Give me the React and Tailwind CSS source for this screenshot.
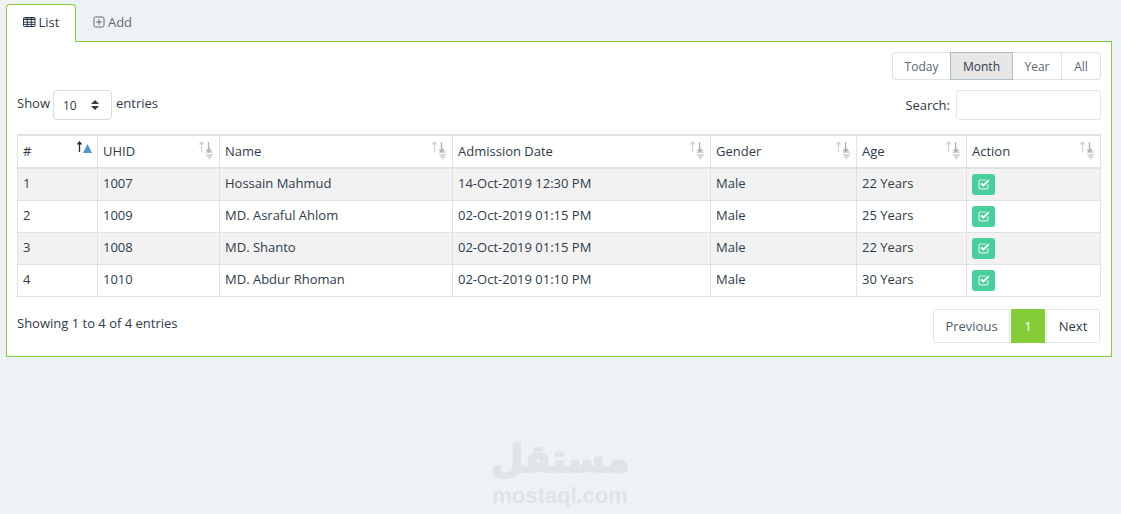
const rows = [
  { id: 1, uhid: '1007', name: 'Hossain Mahmud', date: '14-Oct-2019 12:30 PM', gender: 'Male', age: '22 Years' },
  { id: 2, uhid: '1009', name: 'MD. Asraful Ahlom', date: '02-Oct-2019 01:15 PM', gender: 'Male', age: '25 Years' },
  { id: 3, uhid: '1008', name: 'MD. Shanto', date: '02-Oct-2019 01:15 PM', gender: 'Male', age: '22 Years' },
  { id: 4, uhid: '1010', name: 'MD. Abdur Rhoman', date: '02-Oct-2019 01:10 PM', gender: 'Male', age: '30 Years' },
];

const columns = [
  { label: '#', width: 'w-[80px]', active: true },
  { label: 'UHID', width: 'w-[122px]' },
  { label: 'Name', width: 'w-[233px]' },
  { label: 'Admission Date', width: 'w-[258px]' },
  { label: 'Gender', width: 'w-[146px]' },
  { label: 'Age', width: 'w-[110px]' },
  { label: 'Action', width: 'w-[134px]' },
];

const SortIcon = ({ active }) => (
  <svg width="20" height="22" viewBox="0 0 20 22" className="absolute right-0 top-[3px]">
    {/* up arrow */}
    <path d="M2.5 13V3.5M0.5 5.5L2.5 3L4.5 5.5" fill="none" stroke={active ? '#1f2d3d' : '#cfd4d4'} strokeWidth="1.3" />
    {active ? (
      <path d="M6 14L10.5 5L15 14Z" fill="#4a98cf" />
    ) : (
      <>
        <path d="M6.5 15H14.5L10.5 21Z M6.5 14L10.5 8L14.5 14Z" fill="#d5d9dc" />
        {/* down arrow */}
        <path d="M9.5 3V12.5M7.5 10.5L9.5 13L11.5 10.5" fill="none" stroke="#a9b2b6" strokeWidth="1.3" />
      </>
    )}
  </svg>
);

const CheckIcon = () => (
  <svg width="14" height="14" viewBox="0 0 14 14">
    <path d="M11 7.5V10.5a1.3 1.3 0 0 1-1.3 1.3H3.3A1.3 1.3 0 0 1 2 10.5V4.3A1.3 1.3 0 0 1 3.3 3H9" fill="none" stroke="#d6f3e8" strokeWidth="1.2" />
    <path d="M4.2 6.3L6.4 8.5L11.8 3.2" fill="none" stroke="#fff" strokeWidth="1.9" />
  </svg>
);

const TableIcon = () => (
  <svg width="13" height="12" viewBox="0 0 13 12" className="mr-[3px]">
    <rect x="0.5" y="1.5" width="11.5" height="9" rx="0.8" fill="none" stroke="#2b3a4a" strokeWidth="1" />
    <path d="M0.5 2.5H12V4H0.5Z" fill="#2b3a4a" />
    <path d="M0.5 6.2H12M0.5 8.4H12M4.3 2V10.5M8.2 2V10.5" stroke="#2b3a4a" strokeWidth="1" fill="none" />
  </svg>
);

const PlusIcon = () => (
  <svg width="12" height="12" viewBox="0 0 12 12" className="mr-[3px]">
    <rect x="1" y="1" width="10" height="10" rx="1.5" fill="none" stroke="#5f6870" strokeWidth="1" />
    <path d="M6 3.2V8.8M3.2 6H8.8" stroke="#5f6870" strokeWidth="1" />
  </svg>
);

export default function App() {
  return (
    <div className="relative h-[514px] w-[1121px] overflow-hidden bg-[#eff2f5] px-[6px] pt-1 text-[13px] leading-[18px] text-[#2f3b4a] font-['Open_Sans',sans-serif]">
      {/* tabs */}
      <div className="relative z-10 flex h-[37px]">
        <div className="flex h-[38px] w-[70px] items-center justify-center rounded-t-[4px] border border-b-0 border-[#85cd38] bg-white pb-[4px] text-[#2f3b4a]">
          <TableIcon />
          List
        </div>
        <div className="flex h-[37px] w-[72px] items-center justify-center pb-[1px] pl-[1px] text-[#5f6870]">
          <PlusIcon />
          Add
        </div>
      </div>

      {/* panel */}
      <div className="h-[316px] w-[1106px] border border-[#85cd38] bg-white px-[10px] pt-[10px]">
        <div className="flex justify-end">
          <div className="flex h-[28px] rounded-[3px] border border-[#dde1e6] text-[12px] text-[#5a6672]">
            <div className="flex w-[57px] items-center justify-center pt-[1px]">Today</div>
            <div className="flex w-[63px] -my-px items-center justify-center border border-[#aebbc8] bg-[#e6e6e6] pt-[1px] text-[#2f3b4a]">Month</div>
            <div className="flex w-[49px] items-center justify-center border-r border-[#dde1e6] pt-[1px]">Year</div>
            <div className="flex w-[38px] items-center justify-center pt-[1px]">All</div>
          </div>
        </div>

        <div className="mt-[10px] flex items-center justify-between">
          <div className="flex items-center">
            <span className="pb-[5px]">Show</span>
            <div className="mr-[4px] ml-[3px] flex h-[30px] w-[59px] items-center justify-between rounded-[4px] border border-[#d5dbe1] pl-[9px] pr-[11px] text-[12px]">
              <span className="mt-[2px]">10</span>
              <svg width="10" height="12" viewBox="0 0 10 12">
                <path d="M1 5L5 1L9 5Z M1 7L5 11L9 7Z" fill="#2f3b4a" />
              </svg>
            </div>
            <span className="pb-[5px]">entries</span>
          </div>
          <div className="flex items-center">
            <span className="mr-[6px]">Search:</span>
            <div className="h-[30px] w-[145px] rounded-[3px] border border-[#e2e6ea]" />
          </div>
        </div>

        <table className="mt-[14px] w-[1083px] table-fixed border-collapse">
          <thead>
            <tr className="h-[33px]">
              {columns.map((col) => (
                <th
                  key={col.label}
                  className={`${col.width} relative border border-t-[2px] border-b-[2px] border-[#dfe3e8] px-[5px] pb-[1px] text-left font-normal text-[#2f3b4a]`}
                >
                  {col.label}
                  <SortIcon active={col.active} />
                </th>
              ))}
            </tr>
          </thead>
          <tbody>
            {rows.map((row, i) => (
              <tr key={row.id} className={`h-[32px] ${i % 2 === 0 ? 'bg-[#f2f2f2]' : 'bg-white'}`}>
                <td className="border border-[#dfe3e8] px-[5px] pb-[2px]">{row.id}</td>
                <td className="border border-[#dfe3e8] px-[5px] pb-[2px]">{row.uhid}</td>
                <td className="border border-[#dfe3e8] px-[5px] pb-[2px]">{row.name}</td>
                <td className="border border-[#dfe3e8] px-[5px] pb-[2px]">{row.date}</td>
                <td className="border border-[#dfe3e8] px-[5px] pb-[2px]">{row.gender}</td>
                <td className="border border-[#dfe3e8] px-[5px] pb-[2px]">{row.age}</td>
                <td className="border border-[#dfe3e8] px-[5px]">
                  <div className="flex h-[21px] w-[23px] items-center justify-center rounded-[3px] bg-[#48cf9c]">
                    <CheckIcon />
                  </div>
                </td>
              </tr>
            ))}
          </tbody>
        </table>

        <div className="mt-3 flex items-start justify-between pr-px">
          <div className="pt-[5px]">Showing 1 to 4 of 4 entries</div>
          <div className="flex h-[34px]">
            <div className="flex w-[77px] items-center justify-center rounded-l-[3px] border border-[#dfe3e8] text-[#4f5d6b]">Previous</div>
            <div className="ml-px flex w-[34px] items-center justify-center bg-[#85cd38] text-white">1</div>
            <div className="ml-px flex w-[54px] items-center justify-center rounded-r-[3px] border border-[#dfe3e8]">Next</div>
          </div>
        </div>
      </div>

      {/* watermark */}
      <div className="absolute left-[470px] top-[434px] flex w-[180px] flex-col items-center">
        <span dir="rtl" className="text-[38px] leading-[50px] font-bold text-[#e0e4e7] [-webkit-text-stroke:1.5px_#e0e4e7] font-['DejaVu_Sans',sans-serif]">مستقل</span>
        <span className="text-[22px] leading-[24px] font-bold text-[#e0e4e7] font-['Liberation_Sans',sans-serif]">mostaql.com</span>
      </div>
    </div>
  );
}
